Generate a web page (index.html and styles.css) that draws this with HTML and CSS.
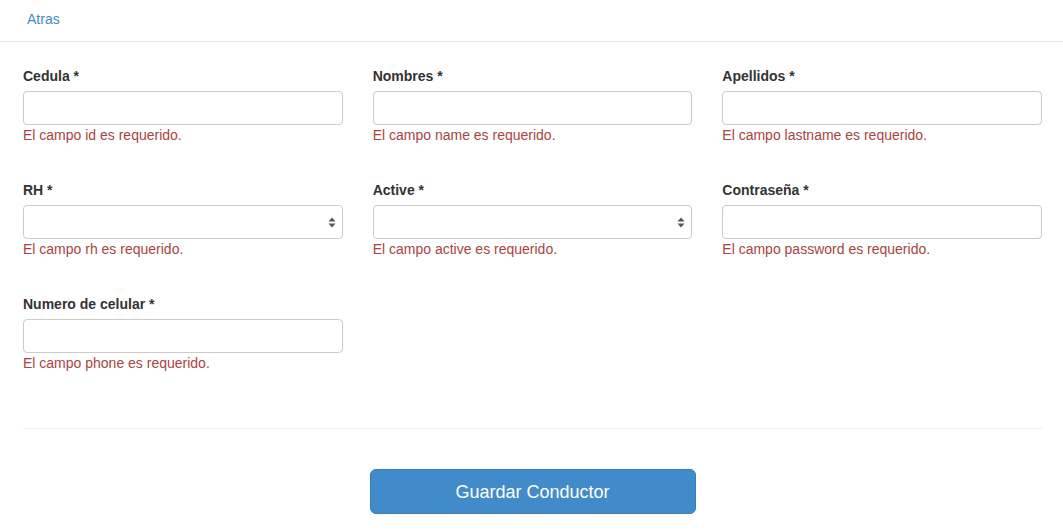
FILE: index.html
```html
<!DOCTYPE html>
<html lang="es">
<head>
<meta charset="utf-8">
<title>Conductor</title>
<link rel="stylesheet" href="styles.css">
</head>
<body>
<nav class="topbar">
  <a class="back-link" href="#">Atras</a>
</nav>
<main class="container">
  <form class="form">
    <div class="grid">
      <div class="field">
        <label class="field-label">Cedula *</label>
        <input class="control" type="text">
        <span class="help-error">El campo id es requerido.</span>
      </div>
      <div class="field">
        <label class="field-label">Nombres *</label>
        <input class="control" type="text">
        <span class="help-error">El campo name es requerido.</span>
      </div>
      <div class="field">
        <label class="field-label">Apellidos *</label>
        <input class="control" type="text">
        <span class="help-error">El campo lastname es requerido.</span>
      </div>
      <div class="field">
        <label class="field-label">RH *</label>
        <div class="select-wrap">
          <select class="control select"><option></option></select>
          <svg class="select-arrows" width="8" height="11" viewBox="0 0 8 11"><path d="M4 0.5 L7.5 4.5 L0.5 4.5 Z" fill="#555"/><path d="M4 10.5 L7.5 6.5 L0.5 6.5 Z" fill="#555"/></svg>
        </div>
        <span class="help-error">El campo rh es requerido.</span>
      </div>
      <div class="field">
        <label class="field-label">Active *</label>
        <div class="select-wrap">
          <select class="control select"><option></option></select>
          <svg class="select-arrows" width="8" height="11" viewBox="0 0 8 11"><path d="M4 0.5 L7.5 4.5 L0.5 4.5 Z" fill="#555"/><path d="M4 10.5 L7.5 6.5 L0.5 6.5 Z" fill="#555"/></svg>
        </div>
        <span class="help-error">El campo active es requerido.</span>
      </div>
      <div class="field">
        <label class="field-label">Contraseña *</label>
        <input class="control" type="password">
        <span class="help-error">El campo password es requerido.</span>
      </div>
      <div class="field">
        <label class="field-label">Numero de celular *</label>
        <input class="control" type="text">
        <span class="help-error">El campo phone es requerido.</span>
      </div>
    </div>
    <hr class="divider">
    <div class="actions">
      <button class="btn-primary" type="button">Guardar Conductor</button>
    </div>
  </form>
</main>
</body>
</html>
```
FILE: styles.css
```css
* { box-sizing: border-box; }
html, body {
  margin: 0;
  padding: 0;
  background: #fff;
  font-family: "Liberation Sans", Arial, sans-serif;
  font-size: 14px;
  line-height: 20px;
  color: #333;
}
.topbar {
  height: 42px;
  border-bottom: 1px solid #e5e5e5;
  padding: 9px 0 0 27px;
}
.back-link {
  color: #428bca;
  text-decoration: none;
  font-size: 14px;
  line-height: 20px;
}
.container {
  width: 1049px;
  margin-left: 8px;
  padding-top: 24px;
}
.grid {
  display: grid;
  grid-template-columns: repeat(3, 1fr);
  row-gap: 35px;
}
.field {
  padding: 0 15px;
  display: flex;
  flex-direction: column;
}
.field-label {
  font-weight: bold;
  margin-bottom: 5px;
  line-height: 20px;
}
.control {
  display: block;
  width: 100%;
  height: 34px;
  border: 1px solid #ccc;
  border-radius: 4px;
  background: #fff;
  font-family: inherit;
  font-size: 14px;
  padding: 6px 12px;
  margin: 0;
}
.select-wrap {
  position: relative;
  width: 100%;
}
.select {
  -webkit-appearance: none;
  appearance: none;
}
.select-arrows {
  position: absolute;
  right: 7px;
  top: 12px;
}
.help-error {
  color: #a94442;
  line-height: 20px;
}
.divider {
  border: 0;
  border-top: 1px solid #eee;
  margin: 55px 15px 20px;
}
.actions {
  display: flex;
  justify-content: center;
  padding-top: 20px;
}
.btn-primary {
  width: 326px;
  height: 45px;
  background: #428bca;
  border: 1px solid #357ebd;
  border-radius: 6px;
  color: #fff;
  font-family: inherit;
  font-size: 18px;
  line-height: 24px;
  padding: 10px 16px;
}
```
